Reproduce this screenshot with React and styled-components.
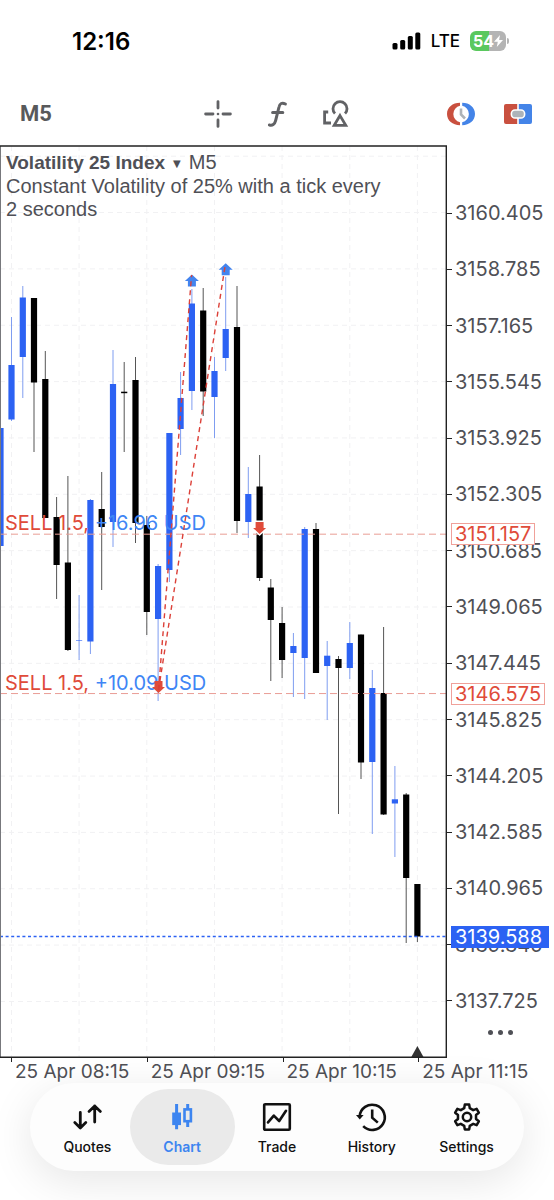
import React from "react";
import styled, { createGlobalStyle } from "styled-components";

const INK = "#4f5056";
const BLUE = "#2c62f3";
const LINK = "#3d85f0";
const RED = "#e04b3a";

const GlobalStyle = createGlobalStyle`
  *, *::before, *::after { box-sizing: border-box; }
  body {
    margin: 0;
    background: #fff;
    color: ${INK};
    font-family: Inter, "Liberation Sans", sans-serif;
  }
  button { font: inherit; color: inherit; background: none; border: 0; padding: 0; cursor: pointer; }
`;

const Screen = styled.div`
  display: flex;
  flex-direction: column;
  min-height: 100vh;
  overflow: hidden;
`;

const StatusBar = styled.header`
  display: flex;
  justify-content: space-between;
  align-items: center;
  height: 82px;
  padding: 0 45px 0 72px;
  color: #000;
`;

const Clock = styled.time`
  font-size: 24px;
  font-weight: 600;
`;

const StatusIcons = styled.div`
  display: flex;
  align-items: center;
  gap: 10px;
  font-size: 17px;
  font-weight: 500;
`;

const Battery = styled.div`
  display: flex;
  align-items: center;
  gap: 1px;
`;

const BatteryLevel = styled.div`
  display: flex;
  align-items: center;
  justify-content: center;
  width: 36px;
  height: 20px;
  border-radius: 6px;
  background: linear-gradient(to right, #5ac85e 54%, #b4b4b4 54%);
  color: #fff;
  font-size: 16px;
  font-weight: 700;
  line-height: 20px;
`;

const BatteryTip = styled.span`
  width: 2px;
  height: 6px;
  border-radius: 0 2px 2px 0;
  background: #b4b4b4;
`;

const Toolbar = styled.div`
  display: grid;
  grid-template-columns: 1fr auto 1fr;
  align-items: center;
  height: 63px;
  padding: 0 20px;
`;

const Timeframe = styled.button`
  justify-self: start;
  font-family: Roboto, "Liberation Sans", sans-serif;
  font-size: 22px;
  font-weight: 700;
  color: #58595b;
`;

const ToolGroup = styled.div`
  display: flex;
  gap: ${(p) => (p.$end ? "29px" : "31px")};
  justify-self: ${(p) => (p.$end ? "end" : "center")};
  padding-right: ${(p) => (p.$end ? "2px" : "0")};
`;

const ToolButton = styled.button`
  width: 28px;
  height: 28px;
  color: #616265;
  svg { display: block; overflow: visible; }
`;

const ChartArea = styled.main`
  display: grid;
  grid-template-columns: minmax(0, 1fr) 107px;
`;

const Plot = styled.section`
  position: relative;
  svg { display: block; width: 100%; height: auto; }
`;

const Heading = styled.div`
  position: absolute;
  top: 5px;
  left: 6px;
  width: 384px;
  font-family: "Liberation Sans", sans-serif;
  font-size: 20px;
  line-height: 24px;
`;

const Symbol = styled.button`
  font-size: 19px;
  font-weight: 700;
  line-height: 24px;
`;

const Caret = styled.span`
  font-family: "DejaVu Sans", sans-serif;
  font-size: 10px;
  line-height: 16px;
  margin: 0 8px;
  vertical-align: 2px;
`;

const Description = styled.p`
  margin: 0;
  line-height: 23px;
`;

const PriceAxis = styled.aside`
  position: relative;
  display: flex;
  flex-direction: column;
  padding-top: 57px;
  font-size: 20px;
  line-height: 22px;
`;

const PriceList = styled.ul`
  display: flex;
  flex: 1;
  flex-direction: column;
  justify-content: space-between;
  margin: 0;
  padding: 0;
  list-style: none;
`;

const Price = styled.li`
  display: flex;
  align-items: center;
  gap: 3px;
  &::before {
    content: "";
    width: 5px;
    height: 1px;
    background: #222;
  }
`;

const PriceTag = styled.span`
  position: absolute;
  top: ${(p) => p.$top}%;
  left: 4px;
  transform: translateY(-50%);
  padding: ${(p) => (p.$live ? "0 6px 0 3px" : "0 3px")};
  border: 1px solid ${(p) => (p.$live ? BLUE : "#f0a19a")};
  background: ${(p) => (p.$live ? BLUE : "#fff")};
  color: ${(p) => (p.$live ? "#fff" : RED)};
  line-height: 20px;
`;

const MoreButton = styled.button`
  display: flex;
  align-items: center;
  justify-content: center;
  gap: 5px;
  height: 46px;
  padding-bottom: 6px;
  span { width: 5px; height: 5px; border-radius: 50%; background: ${INK}; }
`;

const TimeAxis = styled.div`
  display: grid;
  grid-template-columns: repeat(4, minmax(0, 1fr));
  height: 25px;
  padding-left: 11px;
  font-size: 19px;
  line-height: 27px;
  white-space: nowrap;
`;

const TimeLabel = styled.time`
  display: flex;
  gap: 3px;
  &::before {
    content: "";
    width: 1px;
    height: 4px;
    background: #222;
  }
`;

const Footer = styled.footer`
  flex: 1;
  padding: 0 30px 29px;
`;

const TabBar = styled.nav`
  display: grid;
  grid-template-columns: repeat(5, minmax(0, 1fr));
  height: 88px;
  padding: 6px 10px;
  border-radius: 44px;
  background: #fdfdfd;
  box-shadow: 0 10px 44px rgba(0, 0, 0, 0.1);
`;

const Tab = styled.a`
  display: flex;
  flex-direction: column;
  align-items: center;
  gap: 6px;
  height: 76px;
  margin: 0 -5px;
  padding-top: 12px;
  border-radius: 38px;
  background: ${(p) => (p.$active ? "#eaeaea" : "transparent")};
  color: ${(p) => (p.$active ? LINK : "#111")};
  font-size: 14px;
  font-weight: ${(p) => (p.$active ? 600 : 500)};
  line-height: 16px;
  text-decoration: none;
  svg { display: block; }
`;

/* x centre, wick high, body top, body bottom, wick low, rising */
const CANDLES = [
  [0.5, 428, 428, 546, 546, 1],
  [11.5, 317, 365, 419.5, 421, 1],
  [22.8, 286, 297.5, 357, 398, 1],
  [34, 298, 298, 382.5, 452, 0],
  [45.3, 351, 379, 518, 518, 0],
  [56.6, 497, 517, 565, 599, 0],
  [67.9, 476, 562.5, 650, 651, 0],
  [79.1, 595, 640, 640.6, 660, 1],
  [90.4, 499, 500, 641.5, 654, 1],
  [101.7, 472, 509, 527, 590, 0],
  [113, 350, 384, 522, 547, 1],
  [124.2, 362, 391.7, 393.2, 452, 0],
  [135.5, 357, 380, 523, 543, 0],
  [146.8, 516, 525, 612, 635, 0],
  [158.1, 564, 566, 619, 701, 1],
  [169.4, 433, 433, 570, 582, 1],
  [180.6, 372, 398, 429, 455, 1],
  [191.9, 289, 303.5, 391, 410, 1],
  [203.2, 288, 310.5, 391.5, 416, 0],
  [214.5, 357, 371, 397, 438, 1],
  [225.7, 277, 329, 358, 371, 1],
  [237, 286, 327, 521, 533, 0],
  [248.3, 467, 494, 522, 538, 1],
  [259.6, 455, 486.5, 578, 581, 0],
  [270.8, 579, 587.5, 620, 681, 0],
  [282.1, 607, 623, 660, 678, 0],
  [293.4, 633, 646, 653, 697, 1],
  [304.7, 527, 529, 658, 699, 1],
  [316, 523, 529, 673, 673, 0],
  [327.2, 641, 655.7, 666, 720, 1],
  [338.5, 656, 659, 668, 814, 0],
  [349.8, 622, 643, 668, 679, 1],
  [361, 634.5, 634.5, 762.5, 779, 0],
  [372.3, 670, 688, 762, 834, 1],
  [383.6, 627, 693, 814.5, 815, 0],
  [394.9, 766, 799.3, 803.5, 857, 1],
  [406.2, 793, 794.5, 878, 943, 0],
  [417.4, 884, 884, 936.5, 942, 0],
];

const TOP_PRICE = 3160.405;
const STEP = 1.62;
const STEP_PX = 56.35;
const VIEW_TOP = 145;
const VIEW_HEIGHT = 913;
const PRICES = Array.from({ length: 15 }, (_, i) => (TOP_PRICE - i * STEP).toFixed(3));
const yOf = (price) => 212.5 + ((TOP_PRICE - price) / STEP) * STEP_PX;
const percentOf = (price) => ((yOf(price) - VIEW_TOP) / VIEW_HEIGHT) * 100;

const COLUMNS = [11.5, 79.1, 146.8, 214.5, 282.1, 349.8, 417.4];
const TIMES = ["25 Apr 08:15", "25 Apr 09:15", "25 Apr 10:15", "25 Apr 11:15"];
const POSITIONS = [
  { price: 3151.157, side: "SELL 1.5,", profit: "+16.96 USD" },
  { price: 3146.575, side: "SELL 1.5,", profit: "+10.09 USD" },
];
const BID = 3139.588;

function Candle({ data: [x, high, top, bottom, low, up] }) {
  return (
    <g>
      <path d={`M${x} ${high}V${low}`} stroke={up ? "#7f9df0" : "#555"} strokeWidth="1" />
      <rect x={x - 3.1} y={top} width="6.2" height={bottom - top} fill={up ? BLUE : "#000"} />
    </g>
  );
}

function BuyArrow({ x, y }) {
  return <path transform={`translate(${x} ${y})`} d="M0 0L7 6.5H4V12H-4V6.5H-7Z" fill="#4384ee" />;
}

function SellArrow({ x, y, outlined }) {
  return (
    <path
      transform={`translate(${x} ${y})`}
      d="M0 0L6.5 -6H4V-12H-4V-6H-6.5Z"
      fill={RED}
      stroke={outlined ? "#fff" : "none"}
      strokeWidth="3"
      paintOrder="stroke"
    />
  );
}

function CandleChart() {
  return (
    <svg viewBox={`0 ${VIEW_TOP} 447 ${VIEW_HEIGHT}`} role="img" aria-label="Volatility 25 Index, M5 candles">
      <g stroke="#f1f1f3" strokeWidth="1" strokeDasharray="5 4">
        {COLUMNS.map((x) => <path key={x} d={`M${x} 146V1057`} />)}
        {Array.from({ length: 16 }, (_, i) => (
          <path key={i} d={`M0 ${156.2 + i * STEP_PX}H446`} />
        ))}
      </g>
      {CANDLES.map((c) => <Candle key={c[0]} data={c} />)}
      {POSITIONS.map((p) => (
        <path key={p.price} d={`M0 ${yOf(p.price)}H446`} stroke="#e99d95" strokeDasharray="7 4" />
      ))}
      <path d={`M0 ${yOf(BID)}H446`} stroke={BLUE} strokeWidth="1.5" strokeDasharray="3 2.6" />
      {POSITIONS.map((p) => (
        <text key={p.price} x="5" y={yOf(p.price) - 4} fontSize="20" fill={RED} fontFamily="Inter, sans-serif">
          {p.side} <tspan fill="#3f86f5">{p.profit}</tspan>
        </text>
      ))}
      <SellArrow x={259.6} y={534} outlined />
      <SellArrow x={158.5} y={693} />
      <BuyArrow x={191.9} y={274.5} />
      <BuyArrow x={225.7} y={263.2} />
      <g stroke="#dc4038" strokeWidth="1.4" strokeDasharray="5 4">
        <path d="M158.5 690L191.6 275" />
        <path d="M158.5 690L225.4 264" />
      </g>
      <path d="M417.4 1046L423.5 1057H411.3Z" fill="#333" />
      <path d="M0.5 146V1057" stroke="#77787c" fill="none" />
      <path d="M0 146H446.3V1057.2H0" stroke="#222" strokeWidth="1.4" fill="none" />
    </svg>
  );
}

function Signal() {
  return (
    <svg width="29" height="18" viewBox="0 0 29 18" fill="#000" aria-hidden="true">
      <rect x="0.5" y="11" width="5" height="6.5" rx="1.5" />
      <rect x="8.2" y="8" width="5" height="9.5" rx="1.5" />
      <rect x="15.8" y="4" width="5" height="13.5" rx="1.5" />
      <rect x="23.3" y="0.5" width="5" height="17" rx="1.5" />
    </svg>
  );
}

const Icon = ({ size = 28, children, ...rest }) => (
  <svg width={size} height={size} viewBox={`0 0 ${size} ${size}`} fill="none" stroke="currentColor" aria-hidden="true" {...rest}>
    {children}
  </svg>
);

const Crosshair = () => (
  <Icon strokeWidth="2.8" strokeLinecap="round">
    <path d="M1.6 14H9M19 14H26.4M14 1.6V8M14 20V26.4" />
    <circle cx="14" cy="14" r="1.3" fill="currentColor" stroke="none" />
  </Icon>
);

const FunctionIcon = () => (
  <Icon strokeWidth="3" strokeLinecap="round">
    <path d="M22.4 4C19 2.2 16.8 3.4 16 7L12.6 20.6C11.6 24.6 9.4 25.8 6.4 25M9.6 12.4H19.8" />
  </Icon>
);

const ShapesIcon = () => (
  <Icon strokeWidth="2.8">
    <path d="M6.2 12H2.6V23H9" />
    <path d="M13 13.6A7 7 0 1 1 23 13.6" />
    <path d="M18 15.6L23.8 25.4H12.2Z" />
  </Icon>
);

const OneClickIcon = () => (
  <Icon stroke="none">
    <path d="M13 2.8C5.5 2.8 0 7.5 0 14S5.5 25.2 13 25.2V22.3A8.5 8.5 0 0 1 13 5.7Z" fill="#c9503f" />
    <path d="M15.2 2.8C22.5 2.8 28 7.5 28 14S22.5 25.2 15.2 25.2V22.3A8.5 8.5 0 0 0 15.2 5.7Z" fill="#4484e8" />
    <path d="M14 8.5V14.5L18 18.5" stroke="#aeb3b8" strokeWidth="2.6" />
  </Icon>
);

const TradePanelIcon = () => (
  <Icon stroke="none">
    <path d="M2 4H13.2V24H2Q0 24 0 22V6Q0 4 2 4Z" fill="#c9503f" />
    <path d="M14.8 4H26Q28 4 28 6V22Q28 24 26 24H14.8Z" fill="#4484e8" />
    <rect x="7.4" y="10" width="13.2" height="8" rx="3.6" fill="#adb3b9" stroke="#fff" strokeWidth="1.6" />
  </Icon>
);

const QuotesIcon = () => (
  <Icon size={32} strokeWidth="2.8" strokeLinecap="round" strokeLinejoin="round">
    <path d="M9.3 11.5V27M3.8 21.6L9.3 27L14.8 21.6M23.7 21V5M18 10.4L23.7 4.9L29.4 10.4" />
  </Icon>
);

const ChartIcon = () => (
  <Icon size={32}>
    <path d="M10.6 3V28.3M21.7 3V8M21.7 21V26" strokeWidth="3" />
    <rect x="6.2" y="11.5" width="8.8" height="12.6" fill="currentColor" stroke="none" />
    <rect x="18.5" y="8.4" width="6.4" height="11.8" strokeWidth="2.6" />
  </Icon>
);

const TradeIcon = () => (
  <Icon size={32} strokeWidth="2.6" strokeLinejoin="round">
    <rect x="3.2" y="3.2" width="25.6" height="25.6" rx="1" />
    <path d="M7 21.4L12.8 14.6L18.2 20L25 9.8" strokeLinecap="round" />
  </Icon>
);

const HistoryIcon = () => (
  <Icon size={32} strokeWidth="2.6">
    <path d="M3.6 15.5A12.6 12.6 0 1 1 7.2 25.2" />
    <path d="M0 14H7.6L3.8 18.6Z" fill="currentColor" stroke="none" />
    <path d="M16.2 8.6V16.6L21.8 21.6" />
  </Icon>
);

const GEAR_TOOTH = [[-2.8, -8.8], [-2.2, -12.4], [2.2, -12.4], [2.8, -8.8]];
const GEAR = Array.from({ length: 6 }, (_, k) => {
  const a = (k * Math.PI) / 3;
  return GEAR_TOOTH.map(([x, y]) => [
    16 + x * Math.cos(a) - y * Math.sin(a),
    16 + x * Math.sin(a) + y * Math.cos(a),
  ].join(",")).join(" ");
}).join(" ");

const SettingsIcon = () => (
  <Icon size={32} strokeWidth="2.5" strokeLinejoin="round">
    <polygon points={GEAR} />
    <circle cx="16" cy="16" r="4.2" />
  </Icon>
);

const TABS = [
  { label: "Quotes", icon: <QuotesIcon /> },
  { label: "Chart", icon: <ChartIcon />, active: true },
  { label: "Trade", icon: <TradeIcon /> },
  { label: "History", icon: <HistoryIcon /> },
  { label: "Settings", icon: <SettingsIcon /> },
];

export default function App() {
  return (
    <Screen>
      <GlobalStyle />
      <StatusBar>
        <Clock>12:16</Clock>
        <StatusIcons>
          <Signal />
          <span>LTE</span>
          <Battery>
            <BatteryLevel>
              54
              <svg width="9" height="12" viewBox="0 0 9 12" fill="#fff" aria-hidden="true">
                <path d="M6 0L0 6.8H3.8L2.8 12L9 5H5.1Z" />
              </svg>
            </BatteryLevel>
            <BatteryTip />
          </Battery>
        </StatusIcons>
      </StatusBar>

      <Toolbar>
        <Timeframe>M5</Timeframe>
        <ToolGroup>
          <ToolButton aria-label="Crosshair"><Crosshair /></ToolButton>
          <ToolButton aria-label="Indicators"><FunctionIcon /></ToolButton>
          <ToolButton aria-label="Objects"><ShapesIcon /></ToolButton>
        </ToolGroup>
        <ToolGroup $end>
          <ToolButton aria-label="One-click trading"><OneClickIcon /></ToolButton>
          <ToolButton aria-label="Trade panel"><TradePanelIcon /></ToolButton>
        </ToolGroup>
      </Toolbar>

      <ChartArea>
        <Plot>
          <CandleChart />
          <Heading>
            <Symbol>Volatility 25 Index</Symbol>
            <Caret>▼</Caret>M5
            <Description>Constant Volatility of 25% with a tick every 2 seconds</Description>
          </Heading>
        </Plot>
        <PriceAxis>
          <PriceList>
            {PRICES.map((price) => <Price key={price}>{price}</Price>)}
          </PriceList>
          <MoreButton aria-label="More"><span /><span /><span /></MoreButton>
          {POSITIONS.map((p) => (
            <PriceTag key={p.price} $top={percentOf(p.price)}>{p.price}</PriceTag>
          ))}
          <PriceTag $live $top={percentOf(BID)}>{BID}</PriceTag>
        </PriceAxis>
      </ChartArea>
      <TimeAxis>
        {TIMES.map((t) => <TimeLabel key={t}>{t}</TimeLabel>)}
      </TimeAxis>

      <Footer>
        <TabBar>
          {TABS.map((tab) => (
            <Tab key={tab.label} href={`#${tab.label.toLowerCase()}`} $active={tab.active}>
              {tab.icon}
              {tab.label}
            </Tab>
          ))}
        </TabBar>
      </Footer>
    </Screen>
  );
}
